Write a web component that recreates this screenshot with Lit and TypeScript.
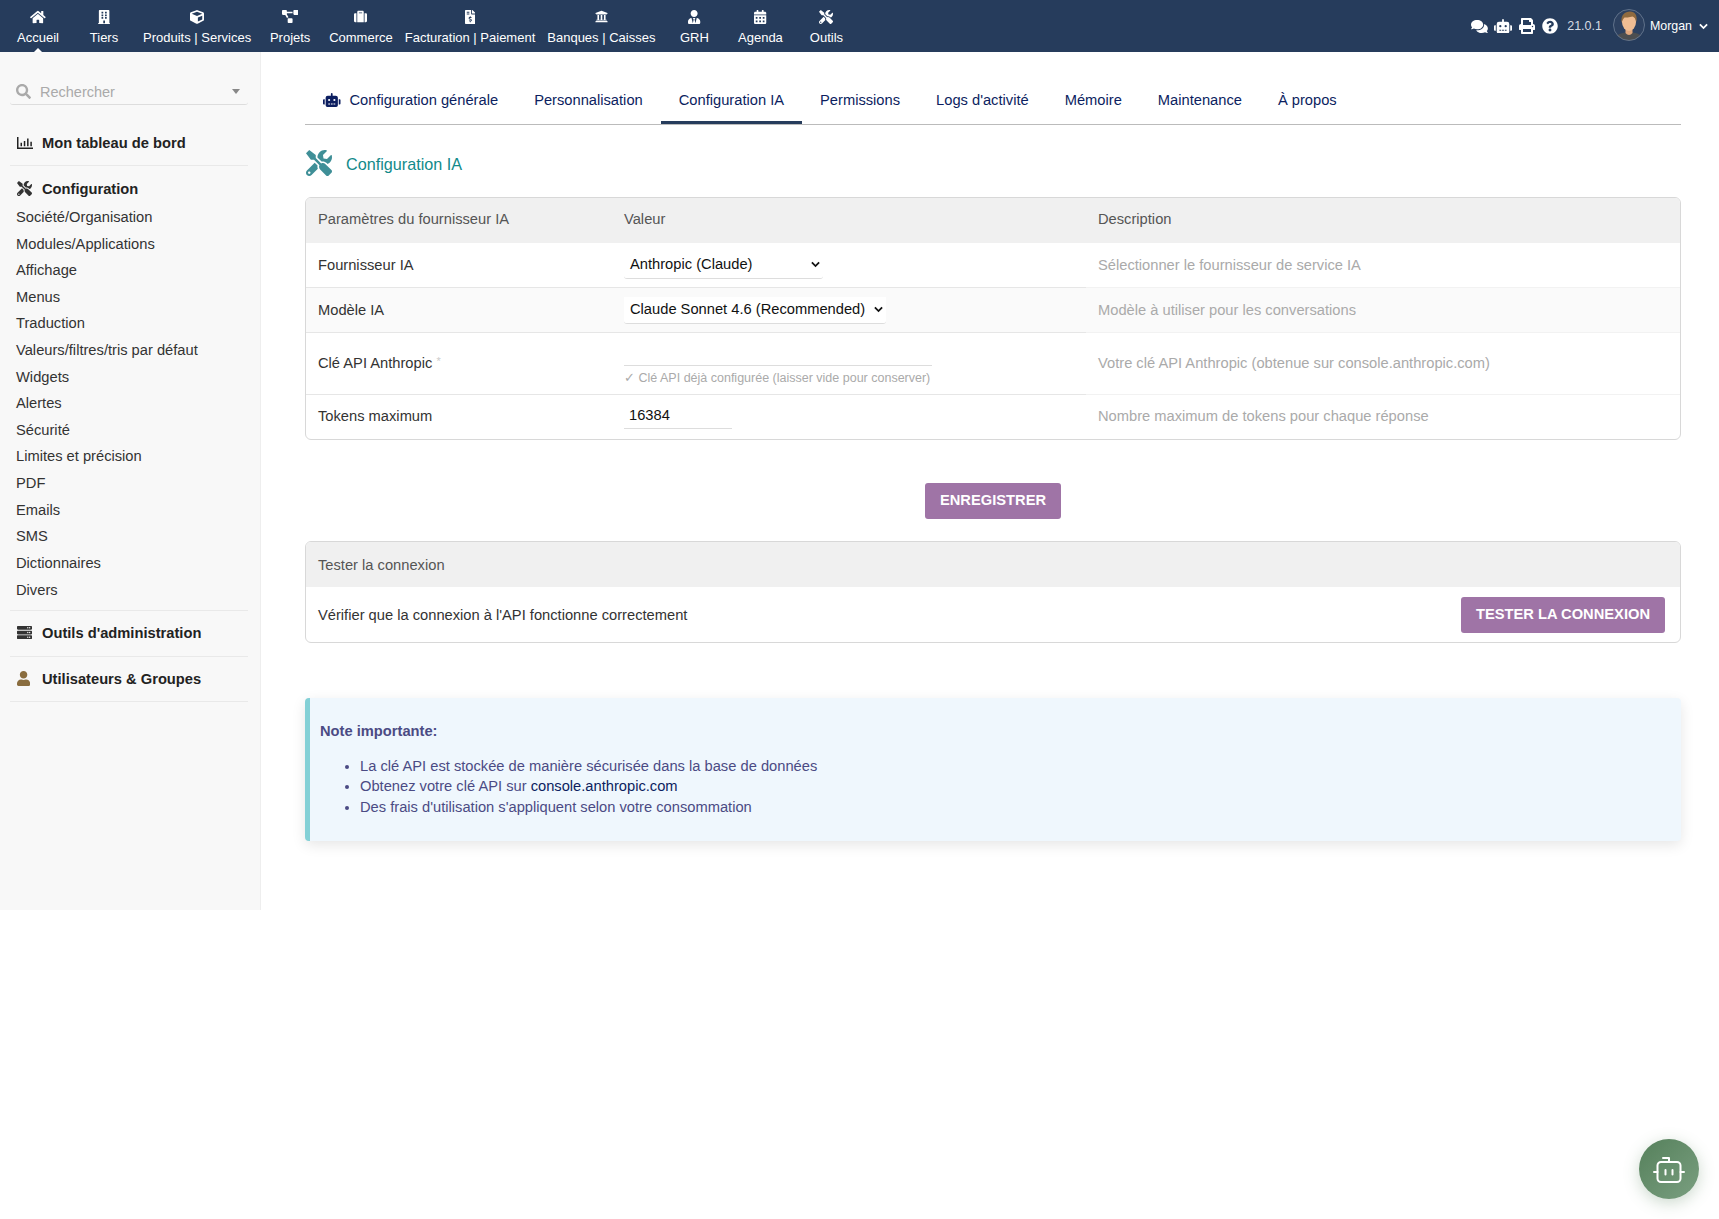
import {css, html, LitElement, svg} from "lit";
import {customElement} from "lit/decorators.js";

// FontAwesome-like glyphs, [viewBox width, path]
const ICONS: Record<string, [number, string]> = {
  home: [576, "M280.37 148.26L96 300.11V464a16 16 0 0 0 16 16l112.06-.29a16 16 0 0 0 15.92-16V368a16 16 0 0 1 16-16h64a16 16 0 0 1 16 16v95.64a16 16 0 0 0 16 16.05L464 480a16 16 0 0 0 16-16V300L295.67 148.26a12.19 12.19 0 0 0-15.3 0zM571.6 251.47L488 182.56V44.05a12 12 0 0 0-12-12h-56a12 12 0 0 0-12 12v72.61L318.47 43a48 48 0 0 0-61 0L4.34 251.47a12 12 0 0 0-1.6 16.9l25.5 31A12 12 0 0 0 45.15 301l235.22-193.74a12.19 12.19 0 0 1 15.3 0L530.9 301a12 12 0 0 0 16.9-1.6l25.5-31a12 12 0 0 0-1.7-16.93z"],
  building: [448, "M436 480h-20V24c0-13.255-10.745-24-24-24H56C42.745 0 32 10.745 32 24v456H12c-6.627 0-12 5.373-12 12v20h448v-20c0-6.627-5.373-12-12-12zM128 76c0-6.627 5.373-12 12-12h40c6.627 0 12 5.373 12 12v40c0 6.627-5.373 12-12 12h-40c-6.627 0-12-5.373-12-12V76zm0 96c0-6.627 5.373-12 12-12h40c6.627 0 12 5.373 12 12v40c0 6.627-5.373 12-12 12h-40c-6.627 0-12-5.373-12-12v-40zm52 148h-40c-6.627 0-12-5.373-12-12v-40c0-6.627 5.373-12 12-12h40c6.627 0 12 5.373 12 12v40c0 6.627-5.373 12-12 12zm76 160h-64v-84c0-6.627 5.373-12 12-12h40c6.627 0 12 5.373 12 12v84zm64-172c0 6.627-5.373 12-12 12h-40c-6.627 0-12-5.373-12-12v-40c0-6.627 5.373-12 12-12h40c6.627 0 12 5.373 12 12v40zm0-96c0 6.627-5.373 12-12 12h-40c-6.627 0-12-5.373-12-12v-40c0-6.627 5.373-12 12-12h40c6.627 0 12 5.373 12 12v40zm0-96c0 6.627-5.373 12-12 12h-40c-6.627 0-12-5.373-12-12V76c0-6.627 5.373-12 12-12h40c6.627 0 12 5.373 12 12v40z"],
  cube: [512, "M239.1 6.3l-208 78c-18.7 7-31.1 25-31.1 45v225.1c0 18.2 10.3 34.8 26.5 42.9l208 104c13.5 6.8 29.4 6.8 42.9 0l208-104c16.3-8.1 26.5-24.8 26.5-42.9V129.3c0-20-12.4-37.9-31.1-44.9l-208-78C262 2.2 250 2.2 239.1 6.3zM256 68.4l192 72v1.1l-192 78-192-78v-1.1l192-72zm32 356V275.5l160-65v133.9l-160 80z"],
  project: [640, "M384 320H256c-17.67 0-32 14.33-32 32v128c0 17.67 14.33 32 32 32h128c17.67 0 32-14.33 32-32V352c0-17.67-14.33-32-32-32zM192 32c0-17.67-14.33-32-32-32H32C14.33 0 0 14.33 0 32v128c0 17.67 14.33 32 32 32h95.72l73.16 128.04C211.98 300.98 232.4 288 256 288h.28L192 175.51V128h224V64H192V32zM608 0H480c-17.67 0-32 14.33-32 32v128c0 17.67 14.33 32 32 32h128c17.67 0 32-14.33 32-32V32c0-17.67-14.33-32-32-32z"],
  suitcase: [512, "M128 480h256V80c0-26.5-21.5-48-48-48H176c-26.5 0-48 21.5-48 48v400zm64-384h128v32H192V96zm320 80v256c0 26.5-21.5 48-48 48h-48V128h48c26.5 0 48 21.5 48 48zM96 480H48c-26.5 0-48-21.5-48-48V176c0-26.5 21.5-48 48-48h48v352z"],
  invoice: [384, "M377 105L279.1 7c-4.5-4.5-10.6-7-17-7H256v128h128v-6.1c0-6.3-2.5-12.4-7-16.9zm-153 31V0H24C10.7 0 0 10.7 0 24v464c0 13.3 10.7 24 24 24h336c13.3 0 24-10.7 24-24V160H248c-13.2 0-24-10.8-24-24zM64 72c0-4.42 3.58-8 8-8h80c4.42 0 8 3.58 8 8v16c0 4.42-3.58 8-8 8H72c-4.42 0-8-3.58-8-8V72zm0 80v-16c0-4.42 3.58-8 8-8h80c4.42 0 8 3.58 8 8v16c0 4.42-3.58 8-8 8H72c-4.42 0-8-3.58-8-8zm144 263.88V440c0 4.42-3.58 8-8 8h-16c-4.42 0-8-3.58-8-8v-24.29c-11.29-.58-22.27-4.52-31.37-11.35-3.9-2.93-4.1-8.77-.57-12.14l11.75-11.21c2.77-2.64 6.89-2.76 10.13-.73 3.87 2.42 8.26 3.72 12.82 3.72h28.11c6.5 0 11.8-5.92 11.8-13.19 0-5.95-3.61-11.19-8.77-12.73l-45-13.5c-18.59-5.58-31.58-23.42-31.58-43.39 0-24.52 19.05-44.44 42.67-45.07V232c0-4.42 3.58-8 8-8h16c4.42 0 8 3.58 8 8v24.29c11.29.58 22.27 4.51 31.37 11.35 3.9 2.93 4.1 8.77.57 12.14l-11.75 11.21c-2.77 2.64-6.89 2.76-10.13.73-3.87-2.43-8.26-3.72-12.82-3.72h-28.11c-6.5 0-11.8 5.92-11.8 13.19 0 5.95 3.61 11.19 8.77 12.73l45 13.5c18.59 5.58 31.58 23.42 31.58 43.39 0 24.53-19.05 44.44-42.67 45.07z"],
  bank: [512, "M496 128v16a8 8 0 0 1-8 8h-24v12c0 6.627-5.373 12-12 12H60c-6.627 0-12-5.373-12-12v-12H24a8 8 0 0 1-8-8v-16a8 8 0 0 1 4.941-7.392l232-88a7.996 7.996 0 0 1 6.118 0l232 88A8 8 0 0 1 496 128zm-24 304H40c-13.255 0-24 10.745-24 24v16a8 8 0 0 0 8 8h464a8 8 0 0 0 8-8v-16c0-13.255-10.745-24-24-24zM96 192v192H60c-6.627 0-12 5.373-12 12v20h416v-20c0-6.627-5.373-12-12-12h-36V192h-64v192h-64V192h-64v192h-64V192H96z"],
  userTie: [448, "M224 256c70.7 0 128-57.3 128-128S294.7 0 224 0 96 57.3 96 128s57.3 128 128 128zm95.8 32.6L272 480l-32-136 32-56h-96l32 56-32 136-47.8-191.4C56.9 292 0 350.3 0 422.4V464c0 26.5 21.5 48 48 48h352c26.5 0 48-21.5 48-48v-41.6c0-72.1-56.9-130.4-128.2-133.8z"],
  calendar: [448, "M0 464c0 26.5 21.5 48 48 48h352c26.5 0 48-21.5 48-48V192H0v272zm320-196c0-6.6 5.4-12 12-12h40c6.6 0 12 5.4 12 12v40c0 6.6-5.4 12-12 12h-40c-6.6 0-12-5.4-12-12v-40zm0 128c0-6.6 5.4-12 12-12h40c6.6 0 12 5.4 12 12v40c0 6.6-5.4 12-12 12h-40c-6.6 0-12-5.4-12-12v-40zM192 268c0-6.6 5.4-12 12-12h40c6.6 0 12 5.4 12 12v40c0 6.6-5.4 12-12 12h-40c-6.6 0-12-5.4-12-12v-40zm0 128c0-6.6 5.4-12 12-12h40c6.6 0 12 5.4 12 12v40c0 6.6-5.4 12-12 12h-40c-6.6 0-12-5.4-12-12v-40zM64 268c0-6.6 5.4-12 12-12h40c6.6 0 12 5.4 12 12v40c0 6.6-5.4 12-12 12H76c-6.6 0-12-5.4-12-12v-40zm0 128c0-6.6 5.4-12 12-12h40c6.6 0 12 5.4 12 12v40c0 6.6-5.4 12-12 12H76c-6.6 0-12-5.4-12-12v-40zM400 64h-48V16c0-8.8-7.2-16-16-16h-32c-8.8 0-16 7.2-16 16v48H160V16c0-8.8-7.2-16-16-16h-32c-8.8 0-16 7.2-16 16v48H48C21.5 64 0 85.5 0 112v48h448v-48c0-26.5-21.5-48-48-48z"],
  tools: [512, "M501.1 395.7L384 278.6c-23.1-23.1-57.6-27.6-85.4-13.9L192 158.1V96L64 0 0 64l96 128h62.1l106.6 106.6c-13.6 27.8-9.2 62.3 13.9 85.4l117.1 117.1c14.6 14.6 38.2 14.6 52.7 0l52.7-52.7c14.5-14.6 14.5-38.2 0-52.7zM331.7 225c28.3 0 54.9 11 74.9 31l19.4 19.4c15.8-6.9 30.8-16.5 43.8-29.5 37.1-37.1 49.7-89.3 37.9-136.7-2.2-9-13.5-12.1-20.1-5.5l-74.4 74.4-67.9-11.3L334 98.9l74.4-74.4c6.6-6.6 3.4-17.9-5.7-20.2-47.4-11.7-99.6.9-136.6 37.9-28.5 28.5-41.9 66.1-41.2 103.6l82.1 82.1c8.1-1.9 16.5-2.9 24.7-2.9zm-103.9 82l-56.7-56.7L18.7 402.8c-25 25-25 65.5 0 90.5s65.5 25 90.5 0l123.6-123.6c-7.6-19.9-9.9-41.6-5-62.7zM64 472c-13.2 0-24-10.8-24-24 0-13.3 10.7-24 24-24s24 10.7 24 24c0 13.2-10.7 24-24 24z"],
  comments: [576, "M416 192c0-88.4-93.1-160-208-160S0 103.6 0 192c0 34.3 14.1 65.9 38 92-13.4 30.2-35.5 54.2-35.8 54.5-2.2 2.3-2.8 5.7-1.5 8.7S4.8 352 8 352c36.6 0 66.9-12.3 88.7-25 32.2 15.7 70.3 25 111.3 25 114.9 0 208-71.6 208-160zm122 220c23.9-26 38-57.7 38-92 0-66.9-53.5-124.2-129.3-148.1.9 6.6 1.3 13.3 1.3 20.1 0 105.9-107.7 192-240 192-10.8 0-21.3-.8-31.7-1.9C207.8 439.6 281.8 480 368 480c41 0 79.1-9.2 111.3-25 21.8 12.7 52.1 25 88.7 25 3.2 0 6.1-1.9 7.3-4.8 1.3-2.9.7-6.3-1.5-8.7-.3-.3-22.4-24.2-35.8-54.5z"],
  robot: [640, "M32,224H64V416H32A31.96166,31.96166,0,0,1,0,384V256A31.96166,31.96166,0,0,1,32,224Zm512-48V448a64.06328,64.06328,0,0,1-64,64H160a64.06328,64.06328,0,0,1-64-64V176a79.974,79.974,0,0,1,80-80H288V32a32,32,0,0,1,64,0V96H464A79.974,79.974,0,0,1,544,176ZM264,256a40,40,0,1,0-40,40A39.997,39.997,0,0,0,264,256Zm-8,128H192v32h64Zm96,0H288v32h64ZM456,256a40,40,0,1,0-40,40A39.997,39.997,0,0,0,456,256Zm-8,128H384v32h64ZM640,256V384a31.96166,31.96166,0,0,1-32,32H576V224h32A31.96166,31.96166,0,0,1,640,256Z"],
  print: [512, "M448 192V77.25c0-8.49-3.37-16.62-9.37-22.63L393.37 9.37c-6-6-14.14-9.37-22.63-9.37H96C78.33 0 64 14.33 64 32v160c-35.35 0-64 28.65-64 64v112c0 8.84 7.16 16 16 16h48v96c0 17.67 14.33 32 32 32h320c17.67 0 32-14.33 32-32v-96h48c8.84 0 16-7.16 16-16V256c0-35.35-28.65-64-64-64zm-64 256H128v-96h256v96zm0-224H128V64h192v48c0 8.84 7.16 16 16 16h48v96zm48 72c-13.25 0-24-10.75-24-24 0-13.26 10.75-24 24-24s24 10.74 24 24c0 13.25-10.75 24-24 24z"],
  help: [512, "M504 256c0 136.997-111.043 248-248 248S8 392.997 8 256C8 119.083 119.043 8 256 8s248 111.083 248 248zM262.655 90c-54.497 0-89.255 22.957-116.549 63.758-3.536 5.286-2.353 12.415 2.715 16.258l34.699 26.31c5.205 3.947 12.621 3.008 16.665-2.122 17.864-22.658 30.113-35.797 57.303-35.797 20.429 0 45.698 13.148 45.698 32.958 0 14.976-12.363 22.667-32.534 33.976C247.128 238.528 216 254.941 216 296v4c0 6.627 5.373 12 12 12h56c6.627 0 12-5.373 12-12v-1.333c0-28.462 83.186-29.647 83.186-106.667 0-58.002-60.165-102-116.531-102zM256 338c-25.365 0-46 20.635-46 46 0 25.364 20.635 46 46 46s46-20.636 46-46c0-25.365-20.635-46-46-46z"],
  search: [512, "M505 442.7L405.3 343c-4.5-4.5-10.6-7-17-7H372c27.6-35.3 44-79.7 44-128C416 93.1 322.9 0 208 0S0 93.1 0 208s93.1 208 208 208c48.3 0 92.7-16.4 128-44v16.3c0 6.4 2.5 12.5 7 17l99.7 99.7c9.4 9.4 24.6 9.4 33.9 0l28.3-28.3c9.4-9.4 9.4-24.6.1-34zM208 336c-70.7 0-128-57.2-128-128 0-70.7 57.2-128 128-128 70.7 0 128 57.2 128 128 0 70.7-57.2 128-128 128z"],
  server: [512, "M480 160H32c-17.673 0-32-14.327-32-32V64c0-17.673 14.327-32 32-32h448c17.673 0 32 14.327 32 32v64c0 17.673-14.327 32-32 32zm-48-88c-13.255 0-24 10.745-24 24s10.745 24 24 24 24-10.745 24-24-10.745-24-24-24zm-64 0c-13.255 0-24 10.745-24 24s10.745 24 24 24 24-10.745 24-24-10.745-24-24-24zm112 248H32c-17.673 0-32-14.327-32-32v-64c0-17.673 14.327-32 32-32h448c17.673 0 32 14.327 32 32v64c0 17.673-14.327 32-32 32zm-48-88c-13.255 0-24 10.745-24 24s10.745 24 24 24 24-10.745 24-24-10.745-24-24-24zm-64 0c-13.255 0-24 10.745-24 24s10.745 24 24 24 24-10.745 24-24-10.745-24-24-24zm112 248H32c-17.673 0-32-14.327-32-32v-64c0-17.673 14.327-32 32-32h448c17.673 0 32 14.327 32 32v64c0 17.673-14.327 32-32 32zm-48-88c-13.255 0-24 10.745-24 24s10.745 24 24 24 24-10.745 24-24-10.745-24-24-24zm-64 0c-13.255 0-24 10.745-24 24s10.745 24 24 24 24-10.745 24-24-10.745-24-24-24z"],
  user: [448, "M224 256c70.7 0 128-57.3 128-128S294.7 0 224 0 96 57.3 96 128s57.3 128 128 128zm89.6 32h-16.7c-22.2 10.2-46.9 16-72.9 16s-50.6-5.8-72.9-16h-16.7C60.2 288 0 348.2 0 422.4V464c0 26.5 21.5 48 48 48h352c26.5 0 48-21.5 48-48v-41.6c0-74.2-60.2-134.4-134.4-134.4z"],
  chart: [683, "M0 0h64v448h619v64H0zM150 250h64v150h-64zM290 170h64v230h-64zM430 60h64v340h-64zM570 200h64v200h-64z"],
};

const icon = (name: string, height: number, color = "currentColor") => {
  const [w, d] = ICONS[name];
  return html`<svg class="ico" viewBox="0 0 ${w} 512" height=${height} width=${(height * w) / 512} fill=${color}>${svg`<path d=${d}></path>`}</svg>`;
};

const chevron = html`<svg class="chev" viewBox="0 0 10 7" width="9" height="7" fill="none" stroke="currentColor" stroke-width="2"><path d="M1 1.2l4 4 4-4"></path></svg>`;

const NAV = [
  ["home", "Accueil", 14], ["building", "Tiers", 14], ["cube", "Produits | Services", 14],
  ["project", "Projets", 13], ["suitcase", "Commerce", 13], ["invoice", "Facturation | Paiement", 14],
  ["bank", "Banques | Caisses", 13], ["userTie", "GRH", 14], ["calendar", "Agenda", 14], ["tools", "Outils", 14],
] as [string, string, number][];

const TABS = ["Configuration générale", "Personnalisation", "Configuration IA", "Permissions", "Logs d'activité", "Mémoire", "Maintenance", "À propos"];

const MENU = ["Société/Organisation", "Modules/Applications", "Affichage", "Menus", "Traduction", "Valeurs/filtres/tris par défaut", "Widgets", "Alertes", "Sécurité", "Limites et précision", "PDF", "Emails", "SMS", "Dictionnaires", "Divers"];

@customElement("app-root")
export class AppRoot extends LitElement {
  static styles = css`
    :host {
      display: block;
      position: relative;
      min-height: 1219px;
      background: #fff;
      font-family: "Liberation Sans", Arial, sans-serif;
      font-size: 14.7px;
      color: #333;
    }
    .ico { display: block; flex: none; }

    .topbar {
      display: flex;
      justify-content: space-between;
      height: 52px;
      padding: 0 11px 0 5px;
      background: #263c5c;
      color: #fff;
    }
    .nav { display: flex; }
    .nav-item {
      position: relative;
      display: flex;
      flex-direction: column;
      align-items: center;
      box-sizing: border-box;
      min-width: 66px;
      padding: 9px 6px 0;
      font-size: 13px;
    }
    .nav-icon { display: flex; align-items: center; height: 15px; margin-bottom: 6px; }
    .nav-item.active::after {
      content: "";
      position: absolute;
      bottom: 0;
      left: 50%;
      margin-left: -4px;
      border: 4px solid transparent;
      border-top: 0;
      border-bottom-color: #fff;
    }
    .tools { display: flex; align-items: center; }
    .tools .ico { margin-right: 7px; }
    .tools .ico:first-child { margin-right: 6px; }
    .tools .chev { margin: 0; }
    .version { margin: 0 11px 0 2px; font-size: 12.5px; color: #d6dbe3; }
    .avatar { width: 32px; height: 32px; margin: -2px 5px 0 0; }
    .who { font-size: 12.4px; margin-right: 7px; }

    .page { display: flex; align-items: flex-start; }

    .sidebar {
      box-sizing: border-box;
      flex: none;
      width: 261px;
      height: 858px;
      padding: 0 12px 0 10px;
      background: #f8f8f8;
      border-right: 1px solid #eee;
    }
    .search {
      display: flex;
      align-items: center;
      box-sizing: border-box;
      height: 30px;
      margin-top: 23px;
      padding: 4px 8px 0 6px;
      color: #aaa;
      font-size: 14.5px;
      border-bottom: 1px solid #ddd;
      border-radius: 0 0 3px 3px;
    }
    .search span { flex: 1; margin-left: 9px; }
    .caret { border: 4px solid transparent; border-top: 5px solid #888; border-bottom: 0; }
    .block { border-bottom: 1px solid #e9e9e9; padding: 13px 0; }
    .block.first { margin-top: 15px; }
    .block.short { padding: 12px 0 14px; }
    .block.end { padding: 12px 0 13px; }
    .head { display: flex; align-items: center; height: 19px; padding-left: 7px; font-weight: bold; color: #222; }
    .head .slot { width: 25px; flex: none; display: flex; }
    .links { padding: 6px 0 0; margin-bottom: -6px; }
    .links a { display: block; height: 26.62px; line-height: 26.62px; padding-left: 6px; color: #333; }

    .main { flex: 1; min-width: 0; padding: 23px 38px 0 44px; }
    .tabs { display: flex; height: 49px; border-bottom: 1px solid #bbb; }
    .tab {
      display: flex;
      align-items: center;
      gap: 9px;
      box-sizing: border-box;
      height: 49px;
      padding: 3px 18px 0;
      border-bottom: 3px solid transparent;
      color: #0c1e60;
    }
    .tab.active { border-bottom-color: #263c5c; }
    .title { display: flex; align-items: center; gap: 14px; height: 26px; margin: 25px 0 21px 1px; font-size: 16.2px; color: #128a8a; }
    .title span { padding-top: 3px; }

    .card { border: 1px solid #d8d8d8; border-radius: 6px; overflow: hidden; }
    .card-head { display: flex; align-items: center; height: 45px; padding: 0 12px; background: #f0f0f0; color: #555; }
    .cfg { width: 100%; border-collapse: collapse; table-layout: fixed; }
    .cfg th { height: 45px; padding: 0 12px 4px; box-sizing: border-box; background: #f0f0f0; color: #555; font-weight: normal; text-align: left; }
    .cfg td { padding: 0 12px; border-bottom: 1px solid #e6e6e6; color: #333; }
    .cfg td.desc { color: #aaa; border-bottom-color: #f2f2f2; }
    .cfg tr.alt td { background: #fafafa; }
    .cfg tr.row td { height: 44px; }
    .cfg tr.tall td { height: 61px; }
    .cfg tr.tall td.up { height: 59px; padding-bottom: 2px; }
    .cfg tr.last td { border-bottom: 0; padding-bottom: 2px; height: 42px; }
    .req { color: #ccc; font-size: 11px; vertical-align: 3px; }

    .select {
      display: flex;
      align-items: center;
      justify-content: space-between;
      box-sizing: border-box;
      height: 27px;
      padding: 0 3px 1px 6px;
      border-bottom: 1px solid #ddd;
      border-radius: 0 0 3px 3px;
      color: #111;
    }
    .select.one { width: 199px; }
    .select.two { width: 262px; background: #fff; }
    .field { box-sizing: border-box; height: 26px; border-bottom: 1px solid #ddd; padding: 0 5px; color: #111; line-height: 24px; }
    .field.key { width: 308px; height: 24px; }
    .field.num { width: 108px; }
    .hint { margin-top: 4px; font-size: 12.5px; color: #aaa; }

    .actions { display: flex; justify-content: center; margin: 43px 0 22px; }
    .btn {
      display: flex;
      align-items: center;
      box-sizing: border-box;
      height: 36px;
      padding: 0 15px 2px;
      background: #9f74a6;
      border-radius: 3px;
      color: #fff;
      font-weight: bold;
      white-space: nowrap;
    }
    .test-row { display: flex; align-items: center; justify-content: space-between; height: 55px; padding: 0 15px 0 12px; color: #333; }

    .note {
      margin-top: 55px;
      height: 143px;
      box-sizing: border-box;
      padding: 25px 10px 0 10px;
      background: #eff7fd;
      border-left: 5px solid #83d0d6;
      border-radius: 4px;
      box-shadow: 0 4px 14px rgba(0,0,0,.1);
      color: #4b4b84;
    }
    .note b { display: block; margin-bottom: 17px; }
    .note ul { margin: 0; padding-left: 40px; }
    .note li { line-height: 20.4px; }
    .note a { color: #0c1e60; }

    .fab {
      position: fixed;
      right: 20px;
      bottom: 20px;
      width: 60px;
      height: 60px;
      display: flex;
      align-items: center;
      justify-content: center;
      border-radius: 50%;
      background: linear-gradient(135deg, #55805b, #7a9f80);
      box-shadow: 0 4px 16px rgba(85,128,91,.3);
    }
  `;

  render() {
    return html`
      <header class="topbar">
        <nav class="nav">
          ${NAV.map(([ic, label, h], i) => html`
            <div class="nav-item ${i === 0 ? "active" : ""}">
              <div class="nav-icon">${icon(ic, h)}</div>
              <span>${label}</span>
            </div>`)}
        </nav>
        <div class="tools">
          ${icon("comments", 15)}${icon("robot", 14.4)}${icon("print", 16)}${icon("help", 16)}
          <span class="version">21.0.1</span>
          <svg class="avatar" viewBox="0 0 32 32">
            <defs><clipPath id="av"><circle cx="16" cy="16" r="15.5"></circle></clipPath></defs>
            <g clip-path="url(#av)">
              <rect width="32" height="32" fill="#2d4160"></rect>
              <path d="M2 32c0-6 4-8 14-9 10 1 14 3 14 9z" fill="#4c4e50"></path>
              <path d="M12.5 19h7v5c-2 2.5-5 2.5-7 0z" fill="#e2a87e"></path>
              <ellipse cx="16" cy="13" rx="7" ry="9" fill="#f0bd93"></ellipse>
              <path d="M8.5 14C7.5 6 12 2.5 17 2.5s7.5 3.5 6.5 10.5c-1-3-2-5-4-5.5-3 1-7 1-8 1-1 1-2.5 3-3 5.5z" fill="#8f6a3f"></path>
            </g>
            <circle cx="16" cy="16" r="15.5" fill="none" stroke="#6f7f96" stroke-width=".8"></circle>
          </svg>
          <span class="who">Morgan</span>
          ${chevron}
        </div>
      </header>

      <div class="page">
        <aside class="sidebar">
          <div class="search">
            ${icon("search", 15, "#aaa")}<span>Rechercher</span><i class="caret"></i>
          </div>
          <div class="block first"><div class="head"><span class="slot">${icon("chart", 12, "#222")}</span>Mon tableau de bord</div></div>
          <div class="block">
            <div class="head"><span class="slot">${icon("tools", 15, "#333")}</span>Configuration</div>
            <div class="links">${MENU.map((m) => html`<a>${m}</a>`)}</div>
          </div>
          <div class="block short"><div class="head"><span class="slot">${icon("server", 15, "#333")}</span>Outils d'administration</div></div>
          <div class="block end"><div class="head"><span class="slot">${icon("user", 15, "#8a6d3f")}</span>Utilisateurs &amp; Groupes</div></div>
        </aside>

        <main class="main">
          <div class="tabs">
            ${TABS.map((t, i) => html`
              <div class="tab ${i === 2 ? "active" : ""}">
                ${i === 0 ? icon("robot", 14, "#0c1e60") : ""}<span>${t}</span>
              </div>`)}
          </div>
          <div class="title">${icon("tools", 26, "#3f8f97")}<span>Configuration IA</span></div>

          <div class="card">
            <table class="cfg">
              <colgroup><col style="width:306px"><col style="width:474px"><col></colgroup>
              <tr><th>Paramètres du fournisseur IA</th><th>Valeur</th><th>Description</th></tr>
              <tr class="row">
                <td>Fournisseur IA</td>
                <td><div class="select one">Anthropic (Claude) ${chevron}</div></td>
                <td class="desc">Sélectionner le fournisseur de service IA</td>
              </tr>
              <tr class="row alt">
                <td>Modèle IA</td>
                <td><div class="select two">Claude Sonnet 4.6 (Recommended) ${chevron}</div></td>
                <td class="desc">Modèle à utiliser pour les conversations</td>
              </tr>
              <tr class="tall">
                <td class="up">Clé API Anthropic <span class="req">*</span></td>
                <td><div class="field key"></div><div class="hint">✓ Clé API déjà configurée (laisser vide pour conserver)</div></td>
                <td class="desc up">Votre clé API Anthropic (obtenue sur console.anthropic.com)</td>
              </tr>
              <tr class="last">
                <td>Tokens maximum</td>
                <td><div class="field num">16384</div></td>
                <td class="desc">Nombre maximum de tokens pour chaque réponse</td>
              </tr>
            </table>
          </div>

          <div class="actions"><div class="btn">ENREGISTRER</div></div>

          <div class="card">
            <div class="card-head">Tester la connexion</div>
            <div class="test-row">
              <span>Vérifier que la connexion à l'API fonctionne correctement</span>
              <div class="btn">TESTER LA CONNEXION</div>
            </div>
          </div>

          <div class="note">
            <b>Note importante:</b>
            <ul>
              <li>La clé API est stockée de manière sécurisée dans la base de données</li>
              <li>Obtenez votre clé API sur <a>console.anthropic.com</a></li>
              <li>Des frais d'utilisation s'appliquent selon votre consommation</li>
            </ul>
          </div>
        </main>
      </div>

      <div class="fab">
        <svg viewBox="0 0 32 32" width="32" height="32" fill="none" stroke="#fff" stroke-width="2" stroke-linecap="round" stroke-linejoin="round">
          <rect x="4.5" y="9" width="23" height="20" rx="3.5"></rect>
          <path d="M16 9V5h-6M1 19h3.5M27.5 19H31M12.5 17v4.5M19.5 17v4.5"></path>
        </svg>
      </div>
    `;
  }
}
